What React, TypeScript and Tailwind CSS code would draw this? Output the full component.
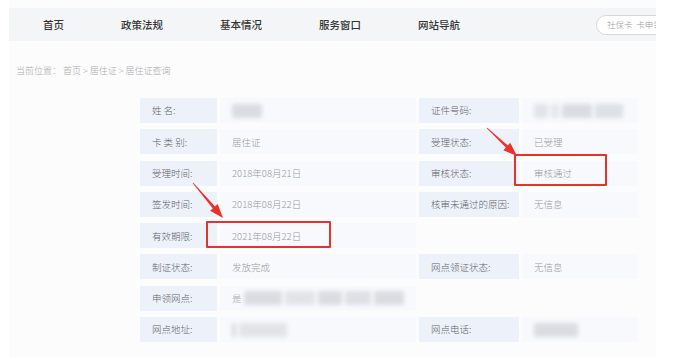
import React from 'react';

const font = { fontFamily: '"Noto Sans CJK SC", "Noto Sans", sans-serif' };

const navItems = ['首页', '政策法规', '基本情况', '服务窗口', '网站导航'];

type Blob = { w: number; o?: number };

const Blur: React.FC<{ parts: Blob[] }> = ({ parts }) => (
  <div className="flex items-center gap-[3px]">
    {parts.map((p, i) => (
      <div
        key={i}
        className="h-[14px] rounded-[2px] bg-[#d3d6db] blur-[2px]"
        style={{ width: p.w, opacity: p.o ?? 0.8 }}
      />
    ))}
  </div>
);

type Cell = React.ReactNode | null;
type Row = { l1: string; v1: Cell; l2?: string; v2?: Cell };

const rows: Row[] = [
  { l1: '姓 名:', v1: <Blur parts={[{ w: 30 }]} />, l2: '证件号码:', v2: <Blur parts={[{ w: 14, o: 0.6 }, { w: 8, o: 0.5 }, { w: 30 }, { w: 28, o: 0.7 }]} /> },
  { l1: '卡 类 别:', v1: '居住证', l2: '受理状态:', v2: '已受理' },
  { l1: '受理时间:', v1: '2018年08月21日', l2: '审核状态:', v2: '审核通过' },
  { l1: '签发时间:', v1: '2018年08月22日', l2: '核审未通过的原因:', v2: '无信息' },
  { l1: '有效期限:', v1: '2021年08月22日' },
  { l1: '制证状态:', v1: '发放完成', l2: '网点领证状态:', v2: '无信息' },
  {
    l1: '申领网点:',
    v1: (
      <div className="flex items-center gap-[2px]">
        <span className="text-[#aaa]">是</span>
        <Blur parts={[{ w: 38 }, { w: 30, o: 0.6 }, { w: 24 }, { w: 26, o: 0.7 }, { w: 30 }]} />
      </div>
    ),
  },
  { l1: '网点地址:', v1: <Blur parts={[{ w: 4, o: 0.9 }, { w: 48, o: 0.6 }]} />, l2: '网点电话:', v2: <Blur parts={[{ w: 44 }]} /> },
];

const Label: React.FC<{ text?: string }> = ({ text }) =>
  text ? (
    <div className="h-[25px] bg-[#edf2fa] pl-[12px] flex items-center text-[9.5px] font-light text-[#5f6368] whitespace-nowrap">{text}</div>
  ) : (
    <div />
  );

const Value: React.FC<{ v?: Cell; show: boolean }> = ({ v, show }) =>
  show ? (
    <div className="h-[25px] bg-[#f7f9fc] pl-[12px] flex items-center text-[9.5px] font-light text-[#999] whitespace-nowrap">{v}</div>
  ) : (
    <div />
  );

export default function App() {
  return (
    <div className="relative w-[675px] h-[357px] overflow-hidden bg-white" style={font}>
      <div className="ml-[9px] w-[647px] h-full bg-[#fcfcfd] pt-[8px]">
        {/* top nav */}
        <div className="h-[33px] bg-[#f4f5f7] flex items-center pl-[34px] overflow-hidden">
          <div className="flex items-center gap-[57px]">
            {navItems.map((n) => (
              <span key={n} className="text-[10.5px] font-medium text-[#333]">
                {n}
              </span>
            ))}
          </div>
          <div className="ml-auto mr-[-40px] w-[100px] h-[20px] rounded-full border border-[#d8d8d8] bg-white flex items-center pl-[10px] text-[8.5px] font-light text-[#999] whitespace-nowrap">
            社保卡&nbsp;&nbsp;卡申领
          </div>
        </div>

        {/* breadcrumb */}
        <div className="mt-[24px] pl-[7px] h-[12px] flex items-center text-[9px] font-light text-[#aaa] whitespace-nowrap">
          当前位置：&nbsp;首页 &gt; 居住证 &gt; 居住证查询
        </div>

        {/* info table */}
        <div className="mt-[21px] ml-[131px] grid grid-cols-[77px_196px_100px_116px] gap-x-[3px] gap-y-[6.3px]">
          {rows.map((r, i) => (
            <React.Fragment key={i}>
              <Label text={r.l1} />
              <Value v={r.v1} show />
              <Label text={r.l2} />
              <Value v={r.v2} show={!!r.l2} />
            </React.Fragment>
          ))}
        </div>
      </div>

      {/* annotations */}
      <div className="absolute left-[514px] top-[154px] w-[93px] h-[32px] border-2 border-[#e2332c] rounded-[1px]" />
      <div className="absolute left-[206px] top-[221px] w-[125px] h-[27px] border-2 border-[#e2332c] rounded-[1px]" />
      <svg className="absolute inset-0 pointer-events-none" width="675" height="357">
        <polygon
          fill="#e8322b"
          points="486.7,128.3 505.8,147.6 503.4,150.2 517,156 510.2,142.8 507.8,145.4 487.3,127.7"
        />
        <polygon
          fill="#e8322b"
          points="192.7,183.3 212.8,208.4 210.1,210.7 223,218 217.7,204.1 215.0,206.4 193.3,182.7"
        />
      </svg>
    </div>
  );
}
